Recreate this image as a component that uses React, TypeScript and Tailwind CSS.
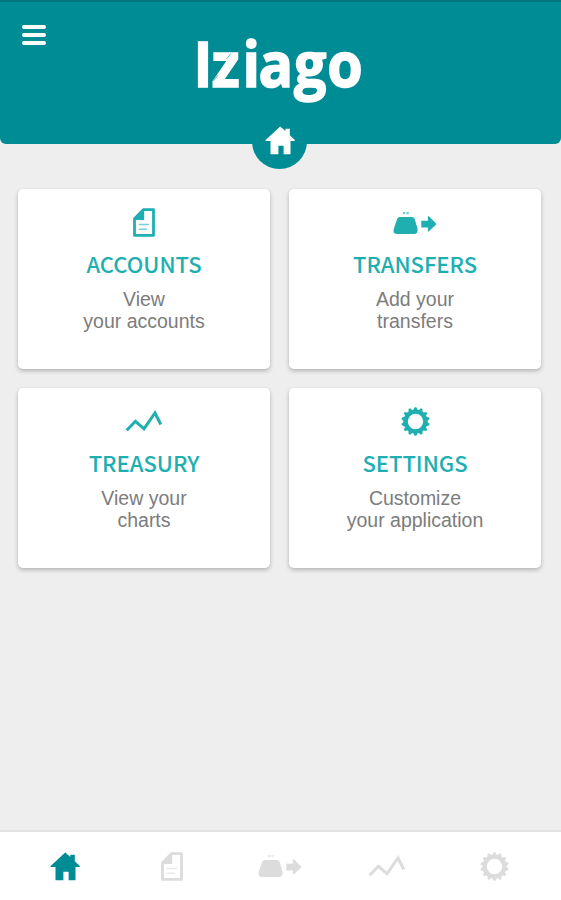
import React, { useState } from 'react';

type IconProps = { className?: string };

const HomeIcon = ({ className }: IconProps) => (
  <svg className={className} width="30" height="29" viewBox="0 0 30 29" fill="currentColor">
    <path d="M15.2 .6 20.4 5V2.8h4.4v6.4l5 4.8q.5.9-.6.9h-3.7v13.4h-6.9v-8.6h-5.2v8.6H5.5V14.9H1.1q-1.1 0-.5-.9z" />
  </svg>
);

const AccountsIcon = ({ className }: IconProps) => (
  <svg className={className} width="22" height="29" viewBox="0 0 22 29">
    <path d="M10.3 1.6H20.5V27.4H1.5V10.8z" fill="none" stroke="currentColor" strokeWidth="2.8" strokeLinejoin="round" />
    <path d="M11.2 1.2V12H1.2V10.5z" fill="currentColor" />
    <path d="M5.8 16.6h10.2M5.8 21.2h8" stroke="currentColor" strokeWidth="1.5" opacity=".6" />
  </svg>
);

const TransfersIcon = ({ className }: IconProps) => (
  <svg className={className} width="44" height="24" viewBox="0 0 44 24" fill="currentColor">
    <path d="M6.8 6h12q2 0 2.8 1.8l3 10.2q.4 5-3.4 5H4Q0 23 .6 18.400L4.200 7.800Q5 6 6.800 6z" />
    <path d="M9.800 2.200h2.400M13.400 2.200h2.400" stroke="currentColor" strokeWidth="2.200" opacity=".6" />
    <path d="M28.300 9.800h6.600V5.500q.2-.9 1-.2l7 7q.7.700 0 1.400l-7 6.500q-.8.600-1-.3V16.600h-6.600z" />
  </svg>
);

const TreasuryIcon = ({ className }: IconProps) => (
  <svg className={className} width="38" height="23" viewBox="0 0 38 23">
    <path d="M1.7 20.3 10.5 11.3 19 18.8 30 3 35.8 14.5" fill="none" stroke="currentColor" strokeWidth="3" />
  </svg>
);

const SettingsIcon = ({ className }: IconProps) => (
  <svg className={className} width="29" height="29" viewBox="-14.5 -14.5 29 29">
    <circle r="9.9" fill="none" stroke="currentColor" strokeWidth="4.4" />
    {Array.from({ length: 14 }, (_, i) => (
      <path
        key={i}
        d="M-2.3 -11.2 -.9 -14.2H.9L2.3 -11.2z"
        fill="currentColor"
        transform={`rotate(${(i * 360) / 14})`}
      />
    ))}
  </svg>
);

const Logo = () => (
  <svg width="176" height="100" viewBox="0 -20 176 100" className="block">
    <g transform="scale(0.91 1)">
      <text
        x="0.5 20.5 54.5 72 111 147.5"
        y="55.2"
        fill="white"
        stroke="white"
        strokeWidth="1.6"
        className="font-['Open_Sans',sans-serif] text-[63px] font-bold"
      >
        Iziago
      </text>
    </g>
    {/* slit in the z */}
    <path d="M38 21.5 33.500 27M25 43 20.500 49" stroke="#008c94" strokeWidth="1" opacity=".6" />
  </svg>
);

const cards = [
  { title: 'ACCOUNTS', lines: ['View', 'your accounts'], Icon: AccountsIcon },
  { title: 'TRANSFERS', lines: ['Add your', 'transfers'], Icon: TransfersIcon },
  { title: 'TREASURY', lines: ['View your', 'charts'], Icon: TreasuryIcon },
  { title: 'SETTINGS', lines: ['Customize', 'your application'], Icon: SettingsIcon },
];

const tabs = [HomeIcon, AccountsIcon, TransfersIcon, TreasuryIcon, SettingsIcon];

export default function App() {
  const [active, setActive] = useState(0);

  return (
    <div className="flex h-[900px] w-full flex-col bg-[#eeeeee]">
      <header className="relative flex h-[144px] shrink-0 justify-center rounded-b-md border-t-2 border-[#007681] bg-[#008c94]">
        <button className="absolute left-[22px] top-[23px] flex w-6 flex-col gap-1" aria-label="Menu">
          <span className="h-[4px] w-full rounded-sm bg-white" />
          <span className="h-[4px] w-full rounded-sm bg-white" />
          <span className="h-[4px] w-full rounded-sm bg-white" />
        </button>
        <div className="mt-[10px]">
          <Logo />
        </div>
        <div className="absolute -bottom-[25px] left-[252px] flex size-[55px] items-center justify-center rounded-full bg-[#008c94] text-white">
          <HomeIcon className="mb-[2px]" />
        </div>
      </header>

      <main className="grid flex-1 grid-cols-2 content-start gap-[19px] pl-[18px] pr-5 pt-[45px]">
        {cards.map(({ title, lines, Icon }) => (
          <div
            key={title}
            className="flex h-[180px] flex-col items-center rounded-[5px] bg-white pt-4 shadow-[0_2px_4px_rgba(0,0,0,0.25)]"
          >
            <div className="flex h-[35px] items-center text-[#20afb1]">
              <Icon />
            </div>
            <h2 className="mt-[9px] font-['Noto_Sans_CJK_SC',sans-serif] text-[22px] font-medium leading-7 text-[#20afb1]">
              {title}
            </h2>
            <p className="mt-[12px] text-center font-['Liberation_Sans',sans-serif] text-[19.5px] leading-[21.5px] text-[#7c7c7c]">
              {lines[0]}
              <br />
              {lines[1]}
            </p>
          </div>
        ))}
      </main>

      <nav className="flex h-[70px] shrink-0 border-t-2 border-[#e3e3e3] bg-white pl-[11px] pr-[13px]">
        {tabs.map((Icon, i) => (
          <button
            key={i}
            onClick={() => setActive(i)}
            className={`flex flex-1 items-center justify-center ${i === active ? 'text-[#008c94]' : 'text-[#dcdcdc]'}`}
          >
            <Icon />
          </button>
        ))}
      </nav>
    </div>
  );
}
